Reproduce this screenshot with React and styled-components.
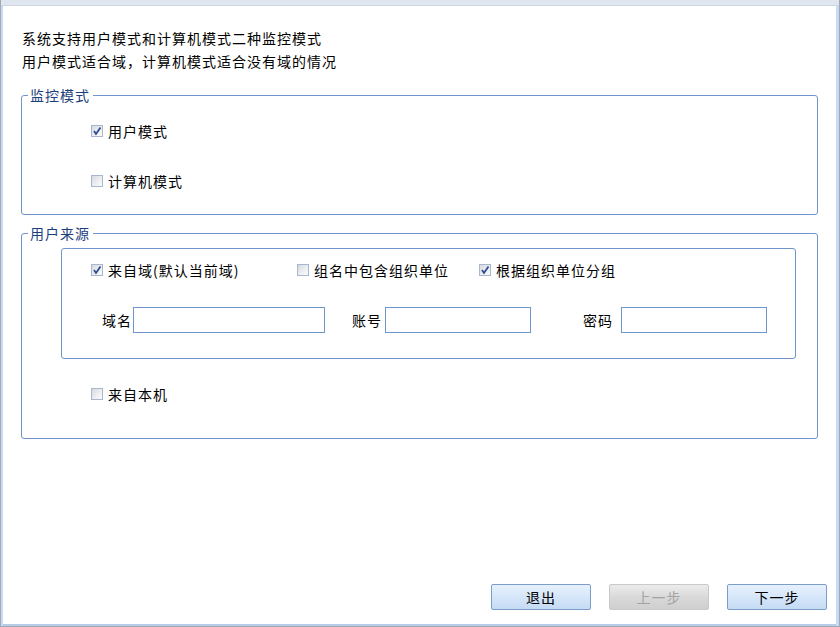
import styled, { createGlobalStyle } from "styled-components";

const GlobalStyle = createGlobalStyle`
  html, body {
    margin: 0;
    padding: 0;
    background: #ffffff;
  }
  body {
    font-family: "SimSun", "Noto Sans CJK SC", "Liberation Sans", sans-serif;
  }
`;

// the little square checkbox, drawn like the old win-style one
const CheckBox = ({ checked }) => (
  <Box>
    {checked && (
      <svg width="10" height="10" viewBox="0 0 10 10">
        <path d="M2 5 L4 8 L8.5 1.5" fill="none" stroke="#2d4d8c" strokeWidth="1.8" />
      </svg>
    )}
  </Box>
);

const Check = ({ checked, label, width }) => (
  <CheckRow style={width ? { width } : undefined}>
    <CheckBox checked={checked} />
    <Label>{label}</Label>
  </CheckRow>
);

const App = () => {
  return (
    <Frame>
      <GlobalStyle />
      <TopBar />
      <Body>
        <Intro>
          <div>系统支持用户模式和计算机模式二种监控模式</div>
          <div>用户模式适合域，计算机模式适合没有域的情况</div>
        </Intro>

        <Group $pt={17} $pb={23}>
          <Legend>监控模式</Legend>
          <Indent>
            <Check checked label="用户模式" />
            <Spacer $h={30} />
            <Check label="计算机模式" />
          </Indent>
        </Group>

        <Group $pt={6} $pb={34} $mt={9}>
          <Legend>用户来源</Legend>
          <InnerBox>
            <CheckLine>
              <Check checked label="来自域(默认当前域)" width="206px" />
              <Check label="组名中包含组织单位" width="182px" />
              <Check checked label="根据组织单位分组" />
            </CheckLine>
            <FieldLine>
              <Field $ml={0} $gap={1}>
                <FieldLabel>域名</FieldLabel>
                <Input $w={192} />
              </Field>
              <Field $ml={27} $gap={3}>
                <FieldLabel>账号</FieldLabel>
                <Input $w={146} />
              </Field>
              <Field $ml={52} $gap={8}>
                <FieldLabel>密码</FieldLabel>
                <Input $w={146} />
              </Field>
            </FieldLine>
          </InnerBox>
          <Indent $mt={25}>
            <Check label="来自本机" />
          </Indent>
        </Group>
      </Body>

      <Footer>
        <Button>退出</Button>
        <Button disabled>上一步</Button>
        <Button>下一步</Button>
      </Footer>
    </Frame>
  );
};

export default App;

const Frame = styled.div`
  width: 840px;
  height: 627px;
  box-sizing: border-box;
  display: flex;
  flex-direction: column;
  background: #ffffff;
  border-left: 1px solid #a3a9b2;
  box-shadow: inset 2px 0 0 #c9dbf2, inset -3px 0 0 #c9dbf2, inset 0 -2px 0 #b6cde9;
  border-right: 1px solid #a3a9b2;
  border-bottom: 1px solid #a3a9b2;
  overflow: hidden;
`;

const TopBar = styled.div`
  height: 5px;
  flex: none;
  background: #dfe6ef;
  border-bottom: 1px solid #cdd7e4;
`;

const Body = styled.div`
  flex: 1;
  padding: 21px 21px 0 20px;
  font-size: 14px;
  letter-spacing: 1px;
  color: #000000;
`;

const Intro = styled.div`
  line-height: 23px;
  padding-left: 1px;
`;

const Group = styled.fieldset`
  margin: ${(p) => p.$mt || 13}px 0 0 0;
  padding: ${(p) => p.$pt}px 0 ${(p) => p.$pb}px 0;
  border: 1px solid #6f95cb;
  border-radius: 3px;
  min-width: 0;
`;

const Legend = styled.legend`
  margin-left: 6px;
  padding: 0 3px 0 2px;
  line-height: 18px;
  font-size: 14px;
  color: #1b3e7c;
`;

const Indent = styled.div`
  padding-left: 69px;
  margin-top: ${(p) => p.$mt || 0}px;
`;

const Spacer = styled.div`
  height: ${(p) => p.$h}px;
`;

const CheckRow = styled.div`
  display: flex;
  align-items: center;
  height: 20px;
  flex: none;
`;

const Box = styled.span`
  width: 10px;
  height: 10px;
  flex: none;
  border: 1px solid #a8b7cd;
  background: linear-gradient(135deg, #d6d9de 0%, #eef0f3 60%, #fafafa 100%);
  display: flex;
  align-items: center;
  justify-content: center;
  margin-right: 5px;
`;

const Label = styled.span`
  line-height: 20px;
  white-space: nowrap;
`;

const InnerBox = styled.div`
  margin: 0 21px 0 39px;
  padding: 11px 0 25px 29px;
  border: 1px solid #6f95cb;
  border-radius: 3px;
`;

const CheckLine = styled.div`
  display: flex;
  align-items: center;
`;

const FieldLine = styled.div`
  display: flex;
  align-items: center;
  margin-top: 27px;
  padding-left: 11px;
`;

const Field = styled.div`
  display: flex;
  align-items: center;
  gap: ${(p) => p.$gap}px;
  margin-left: ${(p) => p.$ml}px;
`;

const FieldLabel = styled.span`
  width: 30px;
  white-space: nowrap;
`;

const Input = styled.input`
  width: ${(p) => p.$w}px;
  height: 26px;
  box-sizing: border-box;
  border: 1px solid #6f95cb;
  background: #ffffff;
  outline: none;
  padding: 0 4px;
  margin: 0;
`;

const Footer = styled.div`
  display: flex;
  justify-content: flex-end;
  gap: 18px;
  padding: 0 12px 16px 0;
`;

const Button = styled.button`
  width: 100px;
  height: 26px;
  box-sizing: border-box;
  border: 1px solid ${(p) => (p.disabled ? "#c9c9c9" : "#7b9dc9")};
  border-radius: 2px;
  background: ${(p) =>
    p.disabled
      ? "linear-gradient(#ececec, #d9d9d9 50%, #cfcfcf)"
      : "linear-gradient(#e8f1fc, #d6e6f9 50%, #c5dbf4)"};
  color: ${(p) => (p.disabled ? "#a3a3a3" : "#000000")};
  font-family: "SimSun", "Noto Sans CJK SC", "Liberation Sans", sans-serif;
  font-size: 14px;
  letter-spacing: 1px;
  padding: 0;
`;
